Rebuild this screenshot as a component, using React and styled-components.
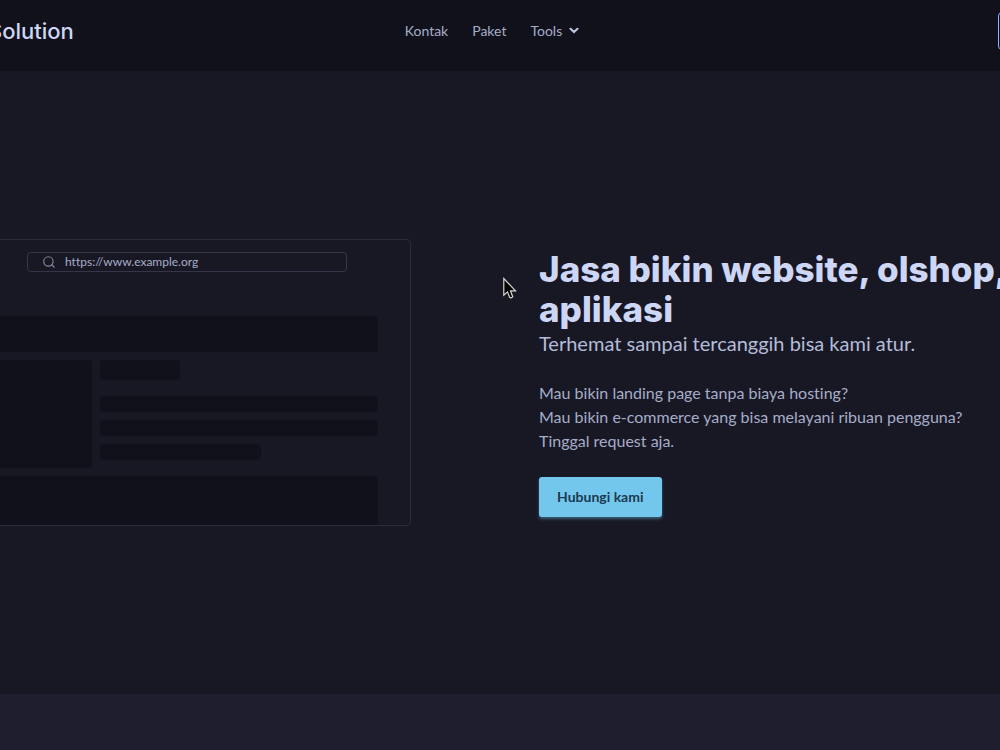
import styled, { createGlobalStyle } from 'styled-components'
import { Search } from 'lucide-react'

const URL_TEXT = 'https://www.example.org'

const GlobalStyle = createGlobalStyle`
  :root {
    --crust: #11111b;
    --mantle: #181825;
    --base: #1e1e2e;
    --border: #2b2b3b;
    --border-strong: #343548;
    --text: #cdd6f4;
    --subtext: #b4bcd8;
    --muted: #a6adc8;
    --sky: #74c7ec;
    --blue: #89b4fa;
    --display: Inter, 'Liberation Sans', sans-serif;
  }
  * {
    box-sizing: border-box;
  }
  body {
    margin: 0;
    background: var(--base);
    color: var(--text);
    font-family: Lato, 'Liberation Sans', sans-serif;
    font-variant-ligatures: none;
    overflow-x: hidden;
  }
  h1,
  p {
    margin: 0;
  }
`

const Header = styled.header`
  background: var(--crust);
  overflow: hidden;
`

const HeaderInner = styled.div`
  display: grid;
  grid-template-columns: 1fr auto 1fr;
  align-items: center;
  height: 71px;
  padding-bottom: 10px;
  margin: 0 -80px 0 -96px;
`

const Brand = styled.a`
  padding-left: 84px;
  color: var(--text);
  font-family: var(--display);
  font-size: 22px;
  line-height: 32px;
  font-weight: 500;
  text-decoration: none;
`

const Nav = styled.nav`
  display: flex;
  gap: 24px;
`

const NavLink = styled.a`
  display: flex;
  align-items: center;
  gap: 7px;
  padding: 0;
  border: none;
  background: none;
  color: var(--muted);
  font: inherit;
  font-size: 14px;
  line-height: 20px;
  text-decoration: none;
  cursor: pointer;
`

const OutlineButton = styled.button`
  justify-self: end;
  width: 82px;
  height: 38px;
  border: 1px solid var(--blue);
  border-radius: 4px;
  background: transparent;
`

const Hero = styled.section`
  position: relative;
  padding: 168px 0;
  background: var(--mantle);
  overflow: hidden;
`

const HeroInner = styled.div`
  display: flex;
  align-items: center;
  gap: 128px;
  margin: 0 -37px;
`

const BrowserFrame = styled.div`
  flex: none;
  display: flex;
  flex-direction: column;
  width: 448px;
  height: 287px;
  padding: 12px 32px 0;
  border: 1px solid var(--border);
  border-radius: 4px;
  overflow: hidden;
`

const AddressBar = styled.label`
  flex: none;
  align-self: center;
  display: flex;
  align-items: center;
  gap: 9px;
  width: 320px;
  height: 20px;
  margin-bottom: 44px;
  padding: 0 14px;
  border: 1px solid var(--border-strong);
  border-radius: 4px;
  color: #7f849c;
  input {
    flex: 1;
    min-width: 0;
    padding: 0;
    border: none;
    outline: none;
    background: none;
    color: var(--muted);
    font: inherit;
    font-size: 12px;
    line-height: 16px;
  }
`

const Skeleton = styled.div`
  flex: none;
  width: ${({ $width }) => $width || '100%'};
  height: ${({ $height }) => $height}px;
  border-radius: 4px;
  background: var(--crust);
`

const SkeletonRow = styled.div`
  display: flex;
  gap: 8px;
  margin: 8px 0;
`

const SkeletonLines = styled.div`
  flex: 1;
  display: flex;
  flex-direction: column;
  gap: 8px;
  ${Skeleton}:first-child {
    margin-bottom: 8px;
  }
`

const Intro = styled.div`
  flex: 1;
  min-width: 0;
`

const Title = styled.h1`
  font-family: var(--display);
  font-size: 35px;
  line-height: 40px;
  font-weight: 800;
`

const Subtitle = styled.p`
  color: var(--subtext);
  font-size: 20px;
  line-height: 28px;
`

const Copy = styled.p`
  margin: 24px 0;
  color: var(--muted);
  font-size: 16px;
  line-height: 24px;
`

const PrimaryButton = styled.button`
  height: 40px;
  padding: 0 18px;
  border: none;
  border-radius: 3px;
  background: var(--sky);
  color: #1c3a50;
  box-shadow: 0 2px 3px rgba(116, 199, 236, 0.4);
  font: inherit;
  font-size: 14px;
  font-weight: 700;
  cursor: pointer;
`

const Pointer = styled.svg`
  position: absolute;
  top: 206px;
  left: 502px;
`

const NextSection = styled.section`
  height: 56px;
  background: var(--base);
`

const Chevron = () => (
  <svg width="10" height="7" viewBox="0 0 10 7" fill="none" stroke="#bac2de" strokeWidth="2.2" strokeLinecap="round">
    <path d="M1.5 1.8 5 5 8.5 1.8" />
  </svg>
)

const App = () => {
  return (
    <>
      <GlobalStyle />
      <Header>
        <HeaderInner>
          <Brand href="#">Solution</Brand>
          <Nav>
            <NavLink href="#kontak">Kontak</NavLink>
            <NavLink href="#paket">Paket</NavLink>
            <NavLink as="button" type="button">
              Tools
              <Chevron />
            </NavLink>
          </Nav>
          <OutlineButton type="button" />
        </HeaderInner>
      </Header>
      <main>
        <Hero>
          <HeroInner>
            <BrowserFrame>
              <AddressBar>
                <Search size={14} />
                <input type="text" defaultValue={URL_TEXT} />
              </AddressBar>
              <Skeleton $height={36} />
              <SkeletonRow>
                <Skeleton $width="96px" $height={108} />
                <SkeletonLines>
                  <Skeleton $width="80px" $height={20} />
                  <Skeleton $height={16} />
                  <Skeleton $height={16} />
                  <Skeleton $width="58%" $height={16} />
                </SkeletonLines>
              </SkeletonRow>
              <Skeleton $height={108} />
            </BrowserFrame>
            <Intro>
              <Title>Jasa bikin website, olshop, aplikasi</Title>
              <Subtitle>Terhemat sampai tercanggih bisa kami atur.</Subtitle>
              <Copy>
                Mau bikin landing page tanpa biaya hosting?
                <br />
                Mau bikin e-commerce yang bisa melayani ribuan pengguna?
                <br />
                Tinggal request aja.
              </Copy>
              <PrimaryButton type="button">Hubungi kami</PrimaryButton>
            </Intro>
          </HeroInner>
          <Pointer width="16" height="24" viewBox="0 0 16 24" fill="#000" stroke="#d8d8d0" strokeWidth="1.2">
            <path d="M1.8 1.6V18.2L5.5 14.9 7.8 20.6Q9.2 21.6 10.7 19.7L8.5 13.8H13.5Z" />
          </Pointer>
        </Hero>
        <NextSection />
      </main>
    </>
  )
}

export default App
